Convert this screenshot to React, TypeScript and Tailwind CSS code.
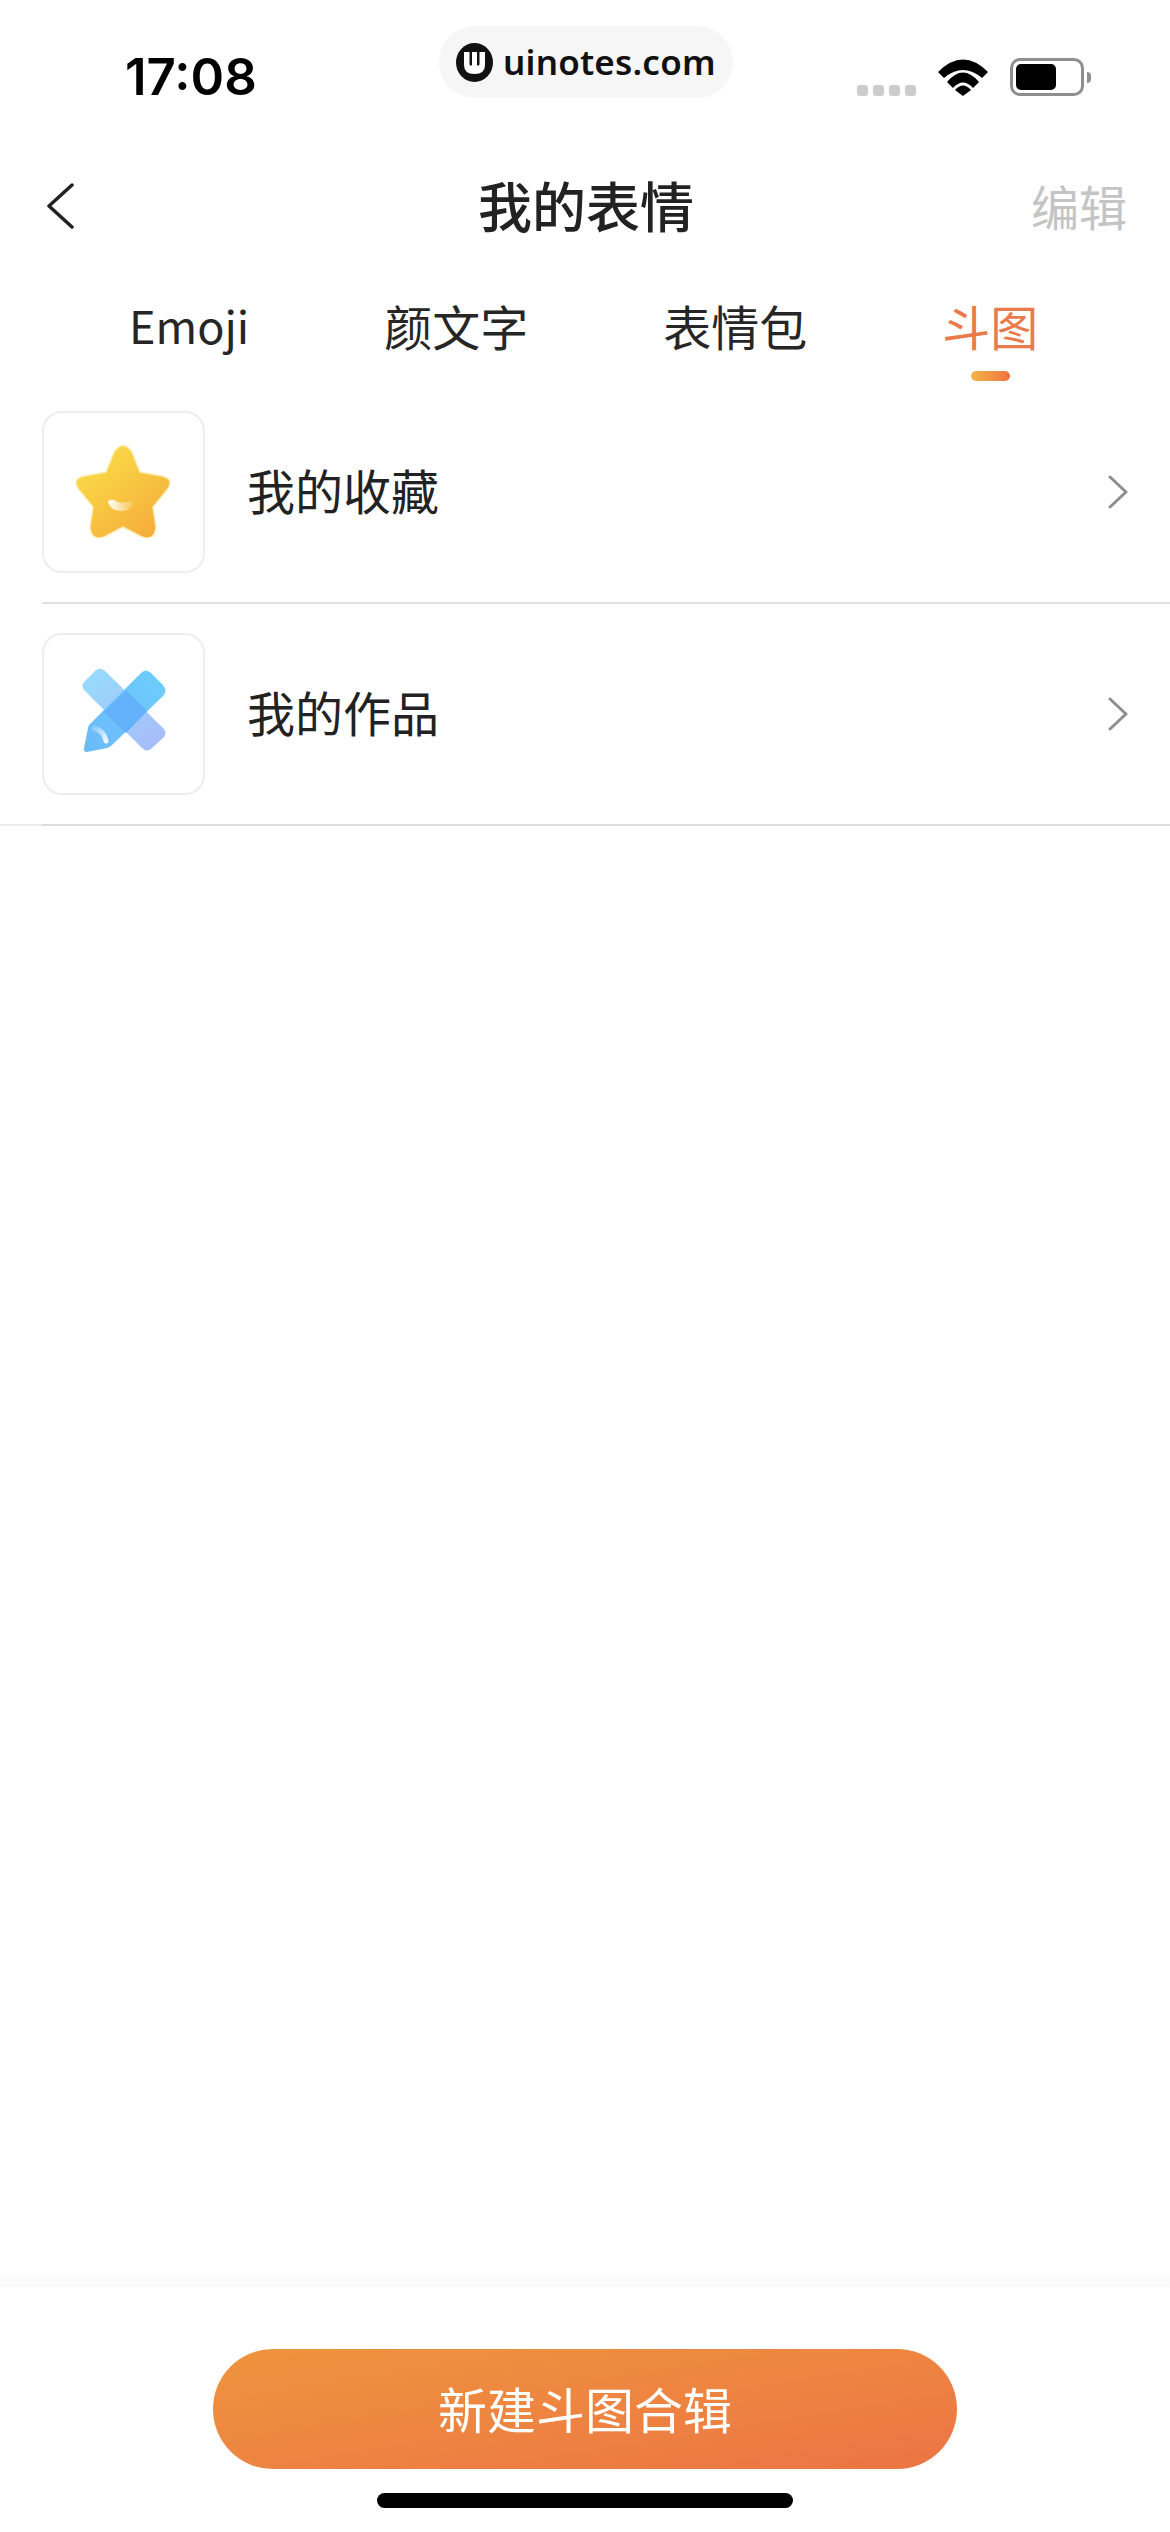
const tabs = ['Emoji', '颜文字', '表情包', '斗图'];

function Chevron() {
  return (
    <svg width="20" height="34" viewBox="0 0 20 34" fill="none" className="shrink-0">
      <path d="M2 2 L18 17 L2 32" stroke="#8e8e8e" strokeWidth="3" strokeLinecap="round" strokeLinejoin="round" />
    </svg>
  );
}

function StarIcon() {
  return (
    <svg width="163" height="162" viewBox="0 0 163 162" fill="none">
      <defs>
        <linearGradient id="star" x1="50" y1="40" x2="115" y2="125" gradientUnits="userSpaceOnUse">
          <stop offset="0" stopColor="#fadd48" />
          <stop offset="1" stopColor="#f5ab3a" />
        </linearGradient>
        <linearGradient id="smile" x1="66" y1="92" x2="94" y2="92" gradientUnits="userSpaceOnUse">
          <stop offset="0" stopColor="#ffffff" />
          <stop offset="1" stopColor="#ffffff" stopOpacity="0" />
        </linearGradient>
      </defs>
      <path
        d="M64 61 L72 41 Q81 28 90 41 L98 61 L120 65 Q133 68 125 79 L111 96 L114 116 Q113 130 100 126 L81 116 L62 126 Q49 130 48 116 L51 96 L37 79 Q29 68 42 65 Z"
        fill="url(#star)"
        stroke="#fdeeb8"
        strokeWidth="1.5"
      />
      <path d="M66 90 Q70 87 74 90 Q82 94 93 88 Q90 100 80 100 Q68 100 66 90 Z" fill="url(#smile)" />
    </svg>
  );
}

function PencilIcon() {
  return (
    <svg width="163" height="162" viewBox="0 0 163 162" fill="none">
      <defs>
        <linearGradient id="ruler" x1="50" y1="40" x2="115" y2="115" gradientUnits="userSpaceOnUse">
          <stop offset="0" stopColor="#97dafd" />
          <stop offset="1" stopColor="#a8bcf9" />
        </linearGradient>
        <linearGradient id="pencil" x1="115" y1="45" x2="50" y2="115" gradientUnits="userSpaceOnUse">
          <stop offset="0" stopColor="#6dccfc" />
          <stop offset="1" stopColor="#6cbbf9" />
        </linearGradient>
        <linearGradient id="shine" x1="50" y1="92" x2="66" y2="110" gradientUnits="userSpaceOnUse">
          <stop offset="0" stopColor="#ffffff" stopOpacity="0.1" />
          <stop offset="1" stopColor="#ffffff" />
        </linearGradient>
      </defs>
      <path
        d="M53 38 Q58 33 63 38 L121 95 Q126 100 121 105 L110 115 Q105 120 100 115 L43 58 Q38 53 43 48 Z"
        fill="url(#ruler)"
      />
      <path
        d="M99 40 Q104 35 109 40 L121 52 Q126 58 121 63 L70 112 Q68 114 65 115 L45 119 Q41 119 42 115 L46 95 Q46 93 48 91 Z"
        fill="url(#pencil)"
      />
      <path d="M84 57 L105 78 L84 100 L62 79 Z" fill="#62b1fa" />
      <path d="M52 95 Q62 98 64 108" stroke="url(#shine)" strokeWidth="5" strokeLinecap="round" />
    </svg>
  );
}

function Row({ label, icon, wide }: { label: string; icon: React.ReactNode; wide?: boolean }) {
  return (
    <div className="mb-[29px]">
      <div className="flex items-start pl-[42px] pr-[42px] pb-[29px]">
        <div className="w-[163px] h-[162px] rounded-[20px] border-2 border-[#eeeeee] box-border flex items-center justify-center shrink-0">
          <div className="shrink-0">{icon}</div>
        </div>
        <div className="flex-1 h-[162px] flex items-center justify-between pl-[42px]">
          <span className="text-[48px] leading-[68px] text-[#222222] pb-[6px]">{label}</span>
          <Chevron />
        </div>
      </div>
      <div className={wide ? 'h-[2px] bg-[#ededed]' : 'h-[2px] ml-[42px] bg-[#e2e2e2]'}>
        {wide && <div className="h-[2px] ml-[42px] bg-[#dcdce0]" />}
      </div>
    </div>
  );
}

export default function App() {
  return (
    <div
      className="w-[1170px] h-[2532px] bg-white relative flex flex-col overflow-hidden"
      style={{ fontFamily: '"Noto Sans CJK SC", "Noto Sans", sans-serif' }}
    >
      {/* status bar */}
      <div className="h-[150px] flex justify-between items-start pt-[47px] pl-[125px] pr-[79px] shrink-0">
        <span className="text-[51px] leading-[60px] font-semibold text-black font-['Inter']">17:08</span>
        <div className="flex items-end gap-[22px] pt-[11px]">
          <div className="flex gap-[5px]">
            {[0, 1, 2, 3].map((i) => (
              <div key={i} className="w-[11px] h-[11px] rounded-[3px] bg-[#cccccc]" />
            ))}
          </div>
          <svg width="50" height="37" viewBox="0 0 50 37" fill="black">
            <path d="M0 13 Q25 -12 50 13 L44 19 Q25 3 6 19 Z" />
            <path d="M9 23 Q25 4 41 23 L35 29 Q25 18 15 29 Z" />
            <path d="M17 31 Q25 22 33 31 L25 37 Z" />
          </svg>
          <div className="flex items-center gap-[3px]">
            <div className="w-[74px] h-[38px] rounded-[10px] border-[3px] border-[#8e8e8e] p-[3px] box-border">
              <div className="w-[40px] h-full rounded-[5px] bg-black" />
            </div>
            <div className="w-[4px] h-[11px] rounded-r-[4px] bg-[#8e8e8e]" />
          </div>
        </div>
      </div>

      {/* watermark pill */}
      <div className="absolute left-[439px] top-[26px] w-[294px] h-[72px] rounded-[36px] bg-[#f6f6f6] flex items-center pl-[17px] gap-[10px]">
        <svg width="37" height="39" viewBox="0 0 37 39">
          <ellipse cx="18.5" cy="19.5" rx="18.5" ry="19.5" fill="#111111" />
          <path d="M8 9 H13.5 V21 Q14 24 16 22 L16 9 H21 L21 22 Q23 24 23.5 21 V9 H29 V22 Q29 31 18.5 31 Q8 31 8 22 Z" fill="white" />
        </svg>
        <span className="text-[35px] leading-[44px] font-semibold text-[#111111] font-['Noto_Sans'] tracking-[0.2px]">uinotes.com</span>
      </div>

      {/* nav */}
      <div className="h-[112px] flex items-center justify-between pl-[46px] pr-[43px] shrink-0 relative">
        <svg width="28" height="46" viewBox="0 0 28 46" fill="none">
          <path d="M26 2 L3 23 L26 44" stroke="#222222" strokeWidth="3.5" strokeLinecap="round" strokeLinejoin="round" />
        </svg>
        <span className="absolute left-0 right-0 text-center text-[54px] leading-[76px] font-medium text-[#222222] pl-[2px] pb-[3px]">我的表情</span>
        <span className="text-[48px] leading-[68px] text-[#c4c4c4] pb-[3px]">编辑</span>
      </div>

      {/* tabs */}
      <div className="flex items-start gap-[135px] pl-[129px] pt-[29px] h-[149px] shrink-0">
        {tabs.map((t, i) => (
          <div key={t} className="flex flex-col items-center">
            <span
              className={
                i === 3
                  ? 'text-[48px] leading-[68px] text-[#e97a4c]'
                  : i === 0
                    ? 'text-[45px] leading-[68px] text-[#262626]'
                    : 'text-[48px] leading-[68px] text-[#262626]'
              }
            >
              {t}
            </span>
            {i === 3 && (
              <div className="mt-[12px] w-[39px] h-[10px] rounded-[5px] bg-gradient-to-r from-[#f3b546] to-[#ee7440]" />
            )}
          </div>
        ))}
      </div>

      <Row label="我的收藏" icon={<StarIcon />} />
      <Row label="我的作品" icon={<PencilIcon />} wide />

      {/* bottom bar */}
      <div className="mt-auto shrink-0">
        <div className="h-[18px] bg-gradient-to-b from-white to-[#fafafa]" />
        <div className="h-[245px] flex flex-col items-center pt-[62px]">
          <button className="w-[744px] h-[120px] rounded-[60px] bg-gradient-to-br from-[#ee943d] to-[#ec7444] text-white text-[49px] leading-[68px] pb-[2px] flex items-center justify-center">
            新建斗图合辑
          </button>
          <div className="mt-[24px] w-[416px] h-[15px] rounded-full bg-black" />
        </div>
      </div>
    </div>
  );
}
